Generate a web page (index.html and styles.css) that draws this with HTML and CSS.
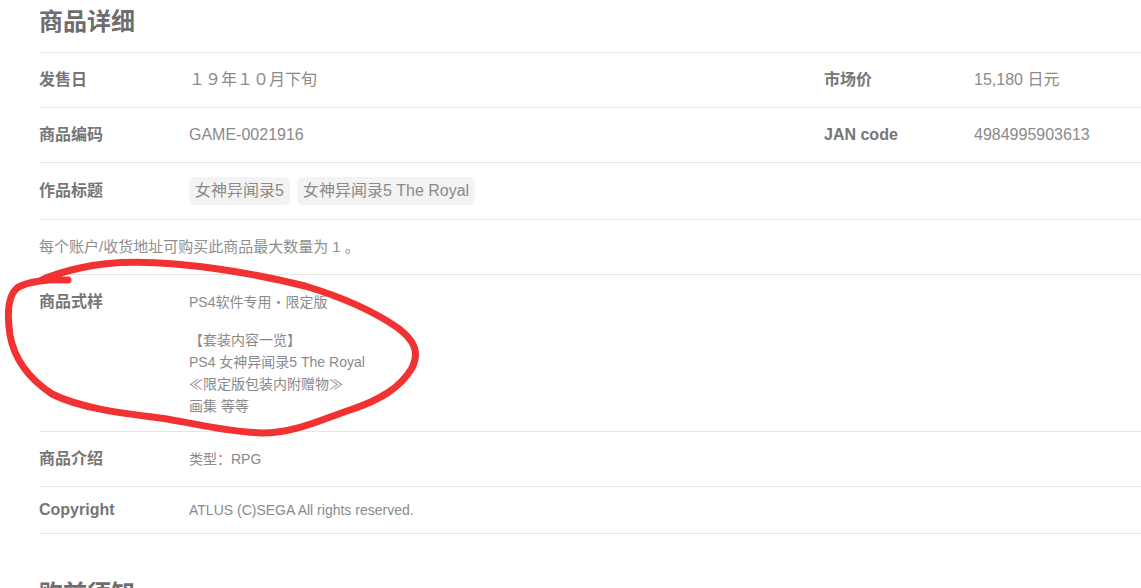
FILE: index.html
```html
<!DOCTYPE html>
<html lang="zh-CN">
<head>
<meta charset="utf-8">
<title>商品详细</title>
<link rel="stylesheet" href="styles.css">
</head>
<body>
<div class="page">
  <section class="section">
    <h2 class="title">商品详细</h2>
    <div class="table">
      <div class="row row-double">
        <div class="k">发售日</div>
        <div class="v">１９年１０月下旬</div>
        <div class="k">市场价</div>
        <div class="v">15,180 日元</div>
      </div>
      <div class="row row-double">
        <div class="k">商品编码</div>
        <div class="v">GAME-0021916</div>
        <div class="k">JAN code</div>
        <div class="v">4984995903613</div>
      </div>
      <div class="row row-tags">
        <div class="k">作品标题</div>
        <div class="v v-wide tags">
          <span class="tag">女神异闻录5</span>
          <span class="tag">女神异闻录5 The Royal</span>
        </div>
      </div>
      <div class="row row-notice">
        <div class="notice">每个账户/收货地址可购买此商品最大数量为 1 。</div>
      </div>
      <div class="row row-spec">
        <div class="k">商品式样</div>
        <div class="v v-wide small">
          <p class="para">PS4软件专用・限定版</p>
          <p class="para">【套装内容一览】<br>PS4 女神异闻录5 The Royal<br>≪限定版包装内附赠物≫<br>画集 等等</p>
        </div>
      </div>
      <div class="row row-single">
        <div class="k">商品介绍</div>
        <div class="v v-wide small">类型：RPG</div>
      </div>
      <div class="row row-copy">
        <div class="k">Copyright</div>
        <div class="v v-wide small">ATLUS (C)SEGA All rights reserved.</div>
      </div>
    </div>
  </section>
  <section class="section section-next">
    <h2 class="title">购前须知</h2>
  </section>
</div>
<svg class="annotation" width="1141" height="588" viewBox="0 0 1141 588" aria-hidden="true">
  <path d="M68 280 C 50 279, 28 281, 17 288 C 8 296, 7 315, 10 335 C 14 358, 28 378, 52 394 C 80 408, 120 413, 160 418 C 195 423, 225 432, 262 433 C 295 433, 320 420, 350 410 C 380 400, 400 388, 412 368 C 420 352, 414 340, 398 328 C 375 312, 345 298, 305 286 C 265 276, 220 268, 175 264 C 140 261, 105 262, 80 268 C 62 272, 50 276, 42 280"
        fill="none" stroke="#f23232" stroke-width="7" stroke-linecap="round" stroke-linejoin="round"/>
</svg>
</body>
</html>
```

FILE: styles.css
```css
html, body {
  margin: 0;
  padding: 0;
  background: #ffffff;
}

body {
  font-family: "Liberation Sans", "Noto Sans CJK SC", sans-serif;
  color: #888888;
  overflow: hidden;
  position: relative;
}

.page {
  padding-left: 39px;
}

.section-next {
  margin-top: 38px;
}

.title {
  margin: 0;
  padding: 5px 0 13px;
  font-size: 24px;
  line-height: 34px;
  font-weight: bold;
  color: #6e6e6e;
}

.table {
  border-top: 1px solid #e6e6e6;
}

.row {
  display: grid;
  grid-template-columns: 150px 635px 150px 1fr;
  align-items: start;
  border-bottom: 1px solid #e6e6e6;
  padding: 17px 0;
}

.k {
  font-size: 16px;
  line-height: 20px;
  font-weight: bold;
  color: #767676;
}

.v {
  font-size: 16px;
  line-height: 20px;
  color: #8a8a8a;
}

.v-wide {
  grid-column: 2 / -1;
}

.small {
  font-size: 14px;
}

.row-tags {
  padding: 14px 0;
  align-items: center;
}

.tags {
  display: flex;
  gap: 7px;
}

.tag {
  display: inline-block;
  background: #f3f3f3;
  border-radius: 6px;
  padding: 0 6px;
  line-height: 28px;
  height: 28px;
  color: #8a8a8a;
}

.row-notice {
  display: block;
}

.notice {
  font-size: 15px;
  line-height: 20px;
  color: #8e8e8e;
}

.row-spec {
  padding: 16px 0 14px;
}

.row-spec .k,
.row-spec .v {
  line-height: 22px;
}

.para {
  margin: 0;
}

.para + .para {
  margin-top: 16px;
}

.row-copy {
  padding: 13px 0;
}

.annotation {
  position: absolute;
  left: 0;
  top: 0;
  pointer-events: none;
}
```
